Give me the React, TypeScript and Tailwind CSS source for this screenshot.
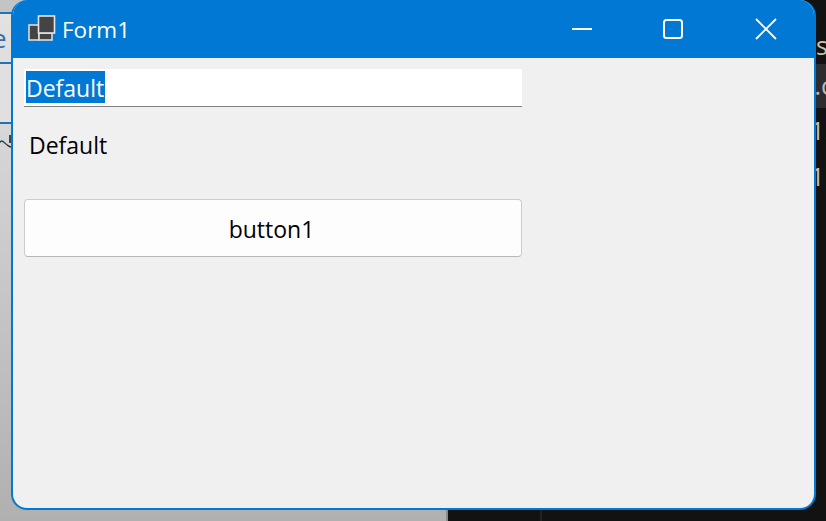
export default function App() {
  const font = { fontFamily: '"Open Sans", "Noto Sans", sans-serif' };
  return (
    <div className="relative w-[826px] h-[521px] overflow-hidden flex bg-[#121212]" style={font}>
      {/* Desktop behind the window: left light application */}
      <div className="w-[448px] h-full flex flex-col bg-gradient-to-b from-[#e4e4e4] to-[#b0b0b0] border-r-2 border-[#8a8a8a]">
        <div className="h-[12px] bg-[#c4c4c4]" />
        <div className="h-[50px] border-t-2 border-[#1f72b8] text-[#3a6ea5] text-[26px] leading-[48px] overflow-hidden">
          <span className="block ml-[-8px]">e</span>
        </div>
        <div className="h-[60px] border-t-2 border-[#1f72b8] bg-[#e0e0e0]" />
        <div className="flex-1 border-t-2 border-[#1f72b8] text-[#222] text-[16px] leading-[38px]">
          <div className="flex items-start">
            <span className="ml-[-4px] w-[13px]">ヘ</span>
            <span className="w-[2px] h-[8px] mt-[11px] bg-[#444]" />
          </div>
        </div>
      </div>
      {/* Desktop behind the window: right dark editor */}
      <div className="flex-1 h-full flex flex-col items-end text-[#c8c0a8] text-[25px] relative">
        <div className="h-[64px] w-full flex justify-end leading-[90px] overflow-hidden">
          <span className="mr-[-2px]">s</span>
        </div>
        <div className="h-[44px] w-full bg-[#2d2d30] flex justify-end items-center text-[#bbb]">
          <span className="mr-[-7px]">.c</span>
        </div>
        <div className="w-full flex justify-end h-[46px] items-center">
          <span className="mr-[-5px]">1.</span>
        </div>
        <div className="w-full flex justify-end h-[46px] items-center">
          <span className="mr-[-5px]">1.</span>
        </div>
        <div className="absolute left-[92px] bottom-0 w-[2px] h-[12px] bg-[#222]" />
      </div>

      {/* Form window */}
      <div className="absolute left-[11px] top-0 w-[805px] h-[510px] rounded-[16px] border-2 border-t-0 border-[#0078d4] bg-[#f0f0f0] overflow-hidden flex flex-col">
        <div className="h-[58px] shrink-0 bg-[#0078d4] flex items-center text-white">
          <svg width="30" height="28" viewBox="0 0 30 28" className="ml-[14px] shrink-0">
            <rect x="2" y="10" width="10" height="15" fill="#444" stroke="#dcdcdc" strokeWidth="1.6" />
            <rect x="12" y="18" width="13" height="7" fill="#444" stroke="#dcdcdc" strokeWidth="1.6" />
            <rect x="11.5" y="1" width="16" height="17" fill="#444" stroke="#e6e6e6" strokeWidth="1.6" />
          </svg>
          <span className="ml-[5px] mt-[2px] text-[22.5px] leading-none">Form1</span>
          <div className="ml-auto flex items-center h-full">
            <svg width="20" height="20" viewBox="0 0 20 20" className="mr-[71px]">
              <path d="M0 10h20" stroke="white" strokeWidth="2" />
            </svg>
            <svg width="20" height="20" viewBox="0 0 20 20" className="mr-[72px]">
              <rect x="1" y="1" width="18" height="18" rx="2.5" fill="none" stroke="white" strokeWidth="2" />
            </svg>
            <svg width="22" height="22" viewBox="0 0 22 22" className="mr-[37px]">
              <path d="M1 1l20 20M21 1L1 21" stroke="white" strokeWidth="1.8" />
            </svg>
          </div>
        </div>
        <div className="flex-1 pl-[11px] pt-[11px] flex flex-col items-start">
          <div className="w-[498px] h-[38px] bg-white border-b border-[#808080] pl-[2px] pt-[2px] text-[23px] text-white">
            <span className="inline-block w-[79px] h-[32px] bg-[#0078d4] leading-[34px] whitespace-nowrap overflow-hidden">Default</span>
          </div>
          <div className="mt-[23px] ml-[5px] h-[30px] text-[23px] leading-[30px] text-black">Default</div>
          <button className="mt-[39px] w-[498px] h-[58px] rounded-[4px] border border-[#cccccc] border-b-[#b8b8b8] bg-[#fdfdfd] text-[23px] text-black pt-[3px] pr-[3px]">button1</button>
        </div>
      </div>
    </div>
  );
}
